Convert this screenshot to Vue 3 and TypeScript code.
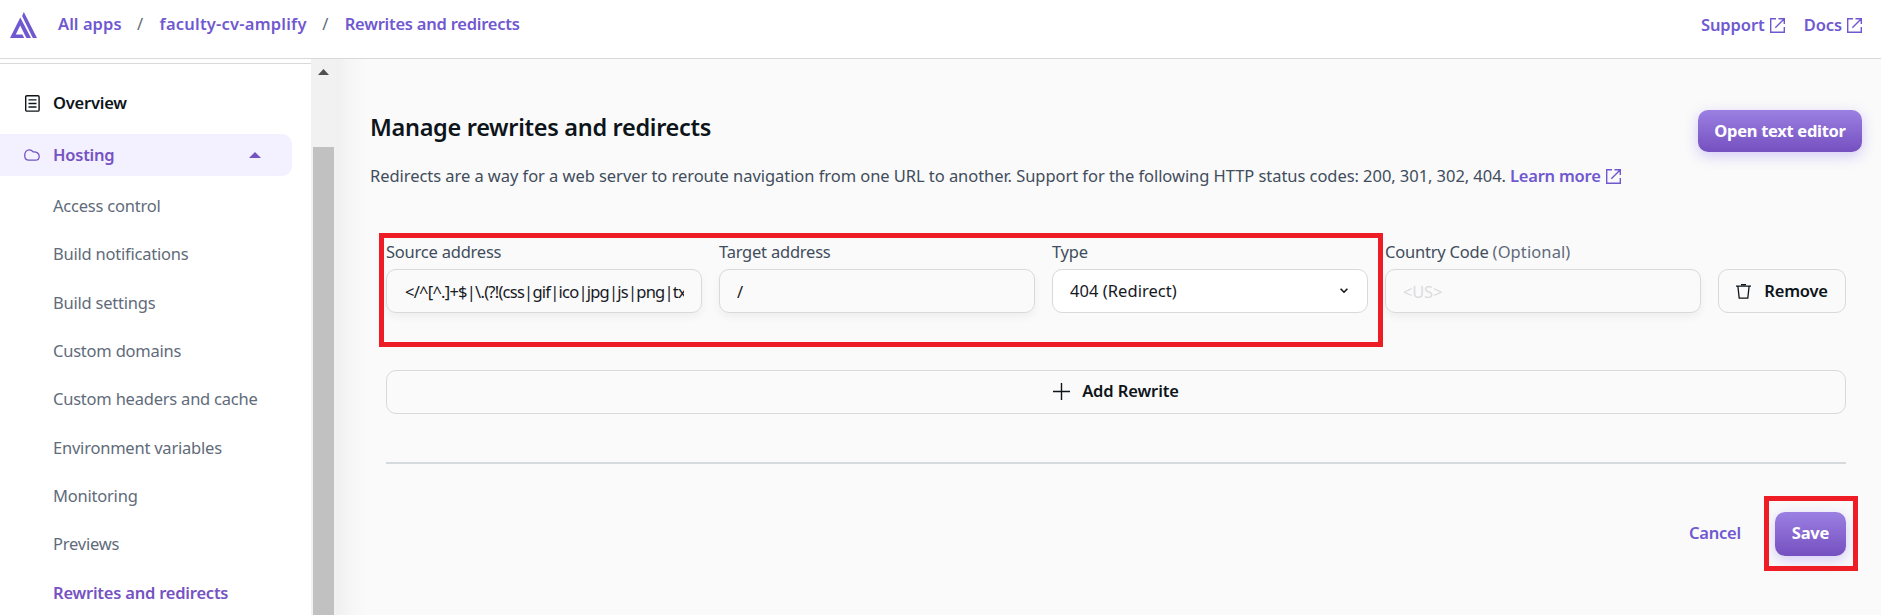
<script setup lang="ts">
interface NavItem {
  label: string
  active?: boolean
}

const sourceAddress = '</^[^.]+$|\\.(?!(css|gif|ico|jpg|js|png|txt|svg|woff)$)([^.]+$)/>'

const items: NavItem[] = [
  { label: 'Access control' },
  { label: 'Build notifications' },
  { label: 'Build settings' },
  { label: 'Custom domains' },
  { label: 'Custom headers and cache' },
  { label: 'Environment variables' },
  { label: 'Monitoring' },
  { label: 'Previews' },
  { label: 'Rewrites and redirects', active: true },
]
</script>

<template>
  <div class="page">
    <header class="topbar">
      <svg class="logo" viewBox="0 0 27 26" width="27" height="26" fill="#7059d0">
        <path fill-rule="evenodd" d="M10.300 5.600 21 26H16.400L10.200 13.500 5.800 22.600H12.400L14.200 26H0Z" />
        <path d="M13.800 0 27 26H22.800L12.100 4Z" />
      </svg>
      <nav class="crumbs">
        <a class="crumb">All apps</a>
        <span class="slash">/</span>
        <a class="crumb app-name">faculty-cv-amplify</a>
        <span class="slash">/</span>
        <a class="crumb current">Rewrites and redirects</a>
      </nav>
      <div class="toplinks">
        <a class="ext">Support
          <svg viewBox="0 0 15 15" width="15" height="15"><path d="M6 .7H.7V14.3H14.3V9M8.5 .7H14.3V6M14.3 .7 5.3 9.7" /></svg>
        </a>
        <a class="ext">Docs
          <svg viewBox="0 0 15 15" width="15" height="15"><path d="M6 .7H.7V14.3H14.3V9M8.5 .7H14.3V6M14.3 .7 5.3 9.7" /></svg>
        </a>
      </div>
    </header>

    <div class="body">
      <aside class="sidebar">
        <a class="section overview">
          <svg viewBox="0 0 15 17" width="15" height="17" fill="none" stroke="#0d141a" stroke-width="1.4">
            <rect x=".7" y=".7" width="13.4" height="15.4" rx="1.2" />
            <path d="M3.5 4.9H11.5M3.5 8.5H11.5M3.5 12H11.5" />
          </svg>
          <span>Overview</span>
        </a>
        <a class="section hosting">
          <svg viewBox="0 0 16 12" width="16" height="12" fill="none" stroke="#7553c2" stroke-width="1.3">
            <path d="M4.8 11.200C2.400 11.200.7 9.200.7 6.200.7 3 2.700.8 5.200.8c1.800 0 3 .8 3.900 2.100C12.600 2.600 15.200 4.300 15.200 7.200c0 2.500-1.400 4-3.700 4Z" />
          </svg>
          <span>Hosting</span>
          <svg class="caret" viewBox="0 0 12 6" width="12" height="6"><path d="M0 6 6 0 12 6Z" fill="#7553c2" /></svg>
        </a>
        <a v-for="item in items" :key="item.label" class="item" :class="{ active: item.active }">
          <span>{{ item.label }}</span>
        </a>
      </aside>
      <div class="scrollbar">
        <svg viewBox="0 0 11 6" width="11" height="6"><path d="M0 6 5.500 0 11 6Z" fill="#505050" /></svg>
        <div class="thumb"></div>
      </div>

      <main class="content">
        <div class="title-row">
          <h1>Manage rewrites and redirects</h1>
          <button class="primary open">Open text editor</button>
        </div>
        <p class="intro">
          <span class="intro-text">Redirects are a way for a web server to reroute navigation from one URL to another. Support for the following HTTP status codes: 200, 301, 302, 404.</span>
          <a class="ext learn">Learn more
            <svg viewBox="0 0 15 15" width="15" height="15"><path d="M6 .7H.7V14.3H14.3V9M8.5 .7H14.3V6M14.3 .7 5.3 9.7" /></svg>
          </a>
        </p>

        <div class="form">
          <div class="row">
            <div class="highlight rule-mark"></div>
            <div class="field">
              <label>Source address</label>
              <input class="control regex" :value="sourceAddress" />
            </div>
            <div class="field">
              <label>Target address</label>
              <input class="control" value="/" />
            </div>
            <div class="field">
              <label>Type</label>
              <div class="control select">
                <span>404 (Redirect)</span>
                <svg viewBox="0 0 8 6" width="8" height="6" fill="none" stroke="#0d141a" stroke-width="1.6"><path d="M.6 .8 4 4.200 7.400 .8" /></svg>
              </div>
            </div>
            <div class="field">
              <label>Country Code <span class="optional">(Optional)</span></label>
              <input class="control" placeholder="<US>" />
            </div>
            <button class="plain remove">
              <svg viewBox="0 0 15 15" width="15" height="15" fill="none" stroke="#0d141a" stroke-width="1.300"><path d="M0 2.100H15M5 .7H10M1.900 2.300 3.200 14.200H11.800L13.100 2.300" /></svg>
              <span>Remove</span>
            </button>
          </div>

          <button class="plain add">
            <svg viewBox="0 0 17 17" width="17" height="17" stroke="#0d141a" stroke-width="1.400"><path d="M8.500 0V17M0 8.500H17" /></svg>
            <span>Add Rewrite</span>
          </button>

          <hr />

          <div class="actions">
            <a class="cancel">Cancel</a>
            <div class="save-wrap">
              <button class="primary save">Save</button>
              <div class="highlight save-mark"></div>
            </div>
          </div>
        </div>
      </main>
    </div>
  </div>
</template>

<style>
html,
body {
  margin: 0;
  overflow: hidden;
}
</style>

<style scoped>
.page {
  width: 1881px;
  height: 615px;
  overflow: hidden;
  display: flex;
  flex-direction: column;
  background: #fff;
  font-family: "Noto Sans", "Open Sans", sans-serif;
  font-size: 16.5px;
  line-height: 24px;
  letter-spacing: -0.22px;
  color: #414d5c;
  white-space: nowrap;
}
.page * {
  box-sizing: border-box;
}
.topbar {
  height: 59px;
  flex: none;
  display: flex;
  align-items: flex-start;
  border-bottom: 1px solid #d9d9db;
  padding: 12px 19px 0 10px;
}
.logo {
  flex: none;
}
.crumbs {
  display: flex;
  margin-left: 21px;
  font-weight: 600;
}
.crumb,
.ext,
.cancel {
  color: #7059d0;
  font-weight: 600;
}
.crumb {
  letter-spacing: 0.05px;
}
.app-name {
  letter-spacing: 0.22px;
}
.current {
  letter-spacing: -0.24px;
}
.slash {
  width: 7px;
  margin: 0 15.500px;
  color: #5f6b7a;
  font-weight: 400;
}
.toplinks {
  margin-left: auto;
  display: flex;
  gap: 19px;
  padding-top: 1px;
  letter-spacing: -0.08px;
}
.ext {
  display: inline-flex;
  align-items: center;
  gap: 5px;
}
.ext svg {
  fill: none;
  stroke: #7059d0;
  stroke-width: 1.400;
}
.body {
  flex: 1;
  display: flex;
  min-height: 0;
}
.sidebar {
  width: 311px;
  flex: none;
  margin-top: 4px;
  border-top: 1px solid #d9d9db;
  padding-top: 18px;
}
.section {
  display: flex;
  align-items: center;
  height: 42px;
  padding-left: 25px;
  font-weight: 600;
}
.section span {
  margin-left: 13px;
}
.overview {
  color: #0d141a;
  margin-bottom: 10px;
}
.hosting {
  width: 302px;
  margin-left: -10px;
  padding-left: 34px;
  padding-right: 31px;
  margin-bottom: 6px;
  border-radius: 10px;
  background: #f3f0ff;
  color: #7553c2;
}
.caret {
  margin-left: auto;
}
.item {
  display: flex;
  align-items: center;
  height: 48.300px;
  padding-left: 53px;
  color: #5f6b7a;
}
.item.active {
  color: #7553c2;
  font-weight: 600;
}
.scrollbar {
  width: 25px;
  flex: none;
  display: flex;
  flex-direction: column;
  align-items: center;
  padding: 10px 2px 0;
  background: #f1f1f1;
}
.scrollbar svg {
  flex: none;
}
.thumb {
  flex: 1;
  width: 21px;
  margin-top: 72px;
  background: #c1c1c1;
}
.content {
  flex: 1;
  padding: 51px 19px 0 34px;
  background: linear-gradient(90deg, #efefef 0, #f6f6f6 14px, #fafafa 32px);
}
.title-row {
  display: flex;
  justify-content: space-between;
  align-items: flex-start;
  height: 54px;
}
h1 {
  margin: 0;
  font-size: 23.500px;
  line-height: 34px;
  font-weight: 600;
  color: #0d141a;
  letter-spacing: -0.310px;
}
button {
  font: inherit;
  letter-spacing: inherit;
  font-weight: 600;
  border: 0;
  padding: 0;
}
.primary {
  color: #fff;
  font-weight: 700;
  border-radius: 10px;
  background: linear-gradient(180deg, #9b80e2, #7550c0);
  box-shadow: 0 4px 14px rgba(120, 90, 240, 0.300);
}
.open {
  width: 164px;
  height: 42px;
  flex: none;
  letter-spacing: -0.3px;
}
.intro {
  display: flex;
  margin: 0;
}
.intro-text {
  width: 1140px;
  letter-spacing: -0.055px;
}
.form {
  padding: 51px 16px 0;
}
.row {
  position: relative;
  display: flex;
  gap: 17px;
  align-items: flex-end;
  height: 74px;
}
.field {
  flex: 1;
  min-width: 0;
}
label {
  display: block;
  height: 29.500px;
  padding-top: 0.500px;
  color: #414d5c;
}
.optional {
  color: #5f6b7a;
  letter-spacing: 0.1px;
}
.control {
  display: flex;
  align-items: center;
  justify-content: space-between;
  width: 100%;
  height: 44px;
  margin: 0;
  padding: 0 17px;
  border: 1px solid #d9d9db;
  border-radius: 10px;
  background: transparent;
  box-shadow: 0 4px 8px rgba(0, 0, 0, 0.050);
  font: inherit;
  letter-spacing: inherit;
  color: #16191f;
}
.control::placeholder {
  color: #dcdcde;
  opacity: 1;
}
.regex {
  padding-left: 18px;
  letter-spacing: -0.76px;
}
.select {
  background: #fff;
  box-shadow: none;
  padding-right: 19px;
  letter-spacing: 0.05px;
}
.plain {
  display: flex;
  align-items: center;
  justify-content: center;
  height: 44px;
  border: 1px solid #d9d9db;
  border-radius: 10px;
  background: transparent;
  color: #0d141a;
}
.remove {
  width: 128px;
  gap: 13px;
}
.add {
  width: 100%;
  margin-top: 57px;
  padding-bottom: 2px;
  gap: 12px;
  letter-spacing: -0.1px;
}
hr {
  height: 2px;
  margin: 48px 0;
  border: 0;
  background: #d5dadd;
}
.actions {
  display: flex;
  justify-content: flex-end;
  align-items: center;
  gap: 34px;
}
.cancel {
  padding-bottom: 2px;
}
.save-wrap {
  position: relative;
}
.save {
  display: block;
  width: 71px;
  height: 44px;
  padding-bottom: 2px;
}
.highlight {
  position: absolute;
  border: 5px solid #ee1c24;
}
.rule-mark {
  left: -7px;
  top: -6px;
  width: 1004px;
  height: 114px;
}
.save-mark {
  left: -11px;
  top: -16px;
  width: 94px;
  height: 75px;
}
</style>
